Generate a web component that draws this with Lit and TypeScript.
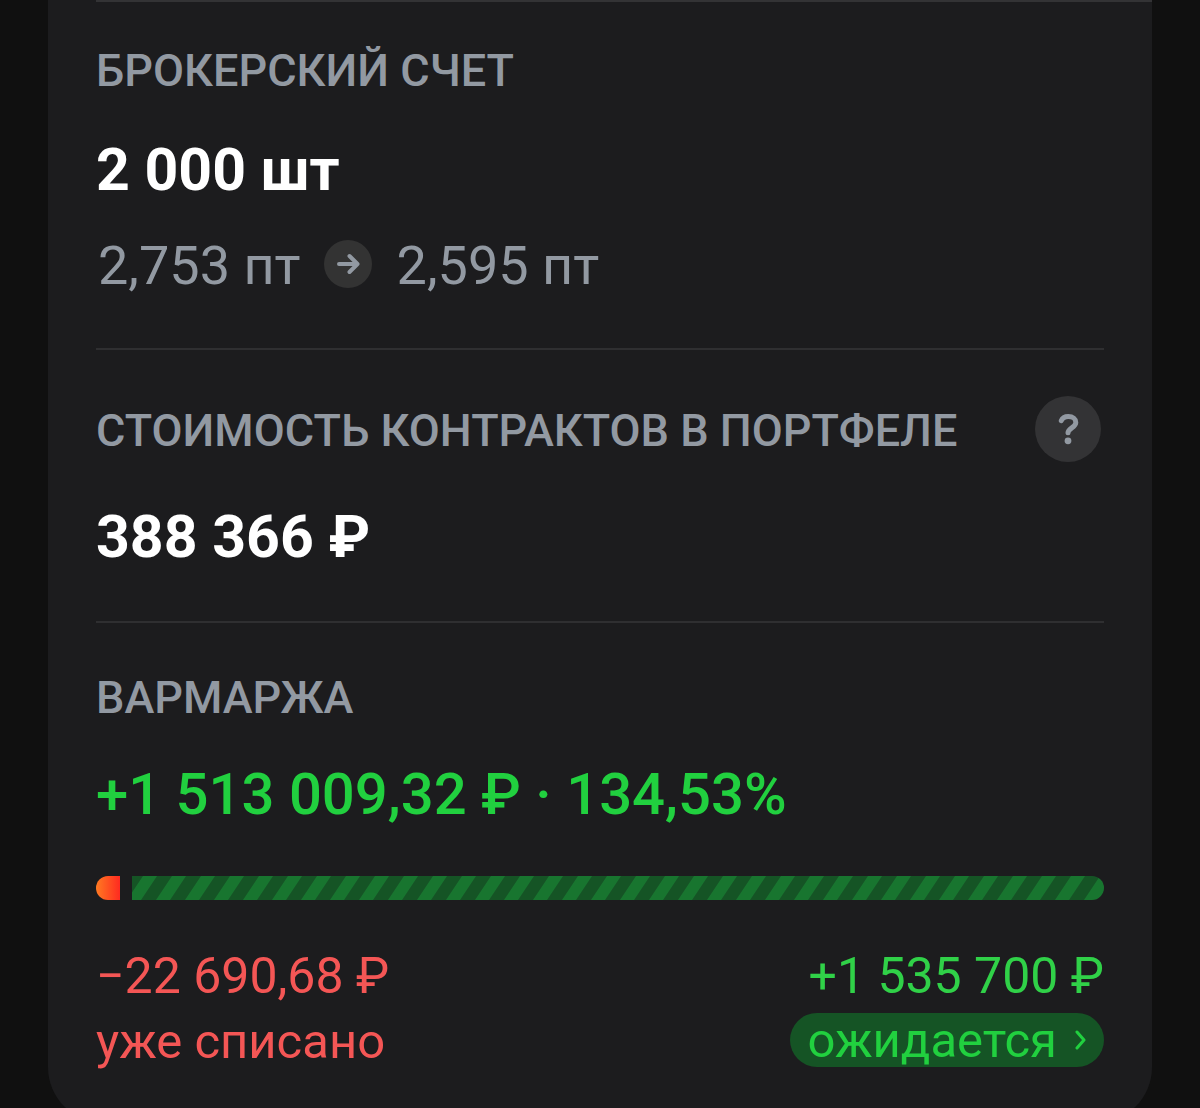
import { LitElement, html, css, svg } from "lit";
import { customElement } from "lit/decorators.js";

@customElement("app-root")
export class AppRoot extends LitElement {
  static styles = css`
    * { box-sizing: border-box; }
    :host {
      display: block;
      min-height: 100vh;
      padding: 0 48px;
      background: #101010;
      color: #ffffff;
      font-family: Roboto, "Liberation Sans", sans-serif;
    }
    .card {
      background: #1c1c1e;
      border-radius: 0 0 56px 56px;
      padding: 0 0 48px 48px;
      overflow: hidden;
    }
    section { margin-right: 48px; border-bottom: 2px solid #2f2f31; }
    section:last-child { border-bottom: 0; }
    .top { border-top: 2px solid #333335; }
    .account { padding: 38px 0 50px; }
    .value { padding: 46px 0 44px; }
    .margin { padding: 44px 0 0; }
    h2 { margin: 0; font-size: 45px; line-height: 62px; font-weight: 500; color: #9299a2; white-space: nowrap; }
    p { margin: 0; white-space: nowrap; }
    .head { display: flex; align-items: flex-end; justify-content: space-between; }
    .help {
      width: 66px; height: 66px; padding: 0; border: 0; border-radius: 50%;
      background: #333335; color: #9299a2; margin-right: 3px;
    }
    .help svg { display: block; width: 66px; height: 66px; }
    .big { margin-top: 28px; font-size: 59px; line-height: 80px; font-weight: 700; }
    .head + .big { margin-top: 35px; }
    .prices { display: flex; align-items: center; gap: 23px; margin-top: 24px; font-size: 54px; line-height: 64px; color: #9299a2; }
    .prices span { padding-left: 2px; }
    .arrow { width: 48px; height: 48px; margin-bottom: 4px; }
    .gain { margin-top: 25px; font-size: 58px; line-height: 80px; font-weight: 500; color: #21d03f; }
    .bar { display: flex; gap: 12px; height: 24px; margin-top: 42px; }
    .paid { width: 24px; border-radius: 12px 0 0 12px; background: linear-gradient(90deg, #ff7a22, #ff2a20); }
    .due { flex: 1; border-radius: 0 12px 12px 0; overflow: hidden; }
    .due svg { display: block; width: 100%; height: 24px; }
    .legend { display: flex; justify-content: space-between; margin-top: 43px; font-size: 49px; line-height: 66px; }
    .sum { font-size: 50px; }
    .loss { color: #f45655; }
    .income { display: flex; flex-direction: column; align-items: flex-end; color: #30d148; }
    .pill {
      display: flex; align-items: center; gap: 16px; height: 54px; padding: 2px 15px 0 18px; margin-top: 4px;
      border: 0; border-radius: 27px; background: #155425; color: #21d03f;
      font: 400 49px/54px Roboto, "Liberation Sans", sans-serif;
    }
    .pill svg { width: 16px; height: 20px; margin-bottom: 2px; }
  `;

  render() {
    return html`
      <main class="card">
        <div class="top"></div>
        <section class="account">
          <h2>БРОКЕРСКИЙ СЧЕТ</h2>
          <p class="big">2 000 шт</p>
          <p class="prices">
            <span>2,753 пт</span>
            <svg class="arrow" viewBox="0 0 48 48" aria-hidden="true">
              <circle cx="24" cy="24" r="24" fill="#333333" />
              <path d="M15 24H33M25.5 16L33.5 24L25.5 32" fill="none" stroke="#9299a2" stroke-width="4" stroke-linecap="round" stroke-linejoin="round" />
            </svg>
            <span>2,595 пт</span>
          </p>
        </section>
        <section class="value">
          <div class="head">
            <h2>СТОИМОСТЬ КОНТРАКТОВ В ПОРТФЕЛЕ</h2>
            <button class="help" aria-label="?">
              <svg viewBox="0 0 66 66" aria-hidden="true">
                <path d="M26.3 24.7C27.5 21.6 30 20.6 33.3 20.6C37.8 20.6 40.8 23 40.8 26.4C40.8 31.6 33 32 33 36.8" fill="none" stroke="currentColor" stroke-width="5" stroke-linecap="round" stroke-linejoin="round" />
                <circle cx="33" cy="44.8" r="3.4" fill="currentColor" />
              </svg>
            </button>
          </div>
          <p class="big">388 366 ₽</p>
        </section>
        <section class="margin">
          <h2>ВАРМАРЖА</h2>
          <p class="gain">+1 513 009,32 ₽ · 134,53%</p>
          <div class="bar">
            <div class="paid"></div>
            <div class="due">
              <svg aria-hidden="true">
                <defs>
                  <pattern id="stripes" width="29" height="24" patternUnits="userSpaceOnUse">
                    <rect width="29" height="24" fill="#155425" />
                    ${svg`<path d="M-5 24L11 0H25L9 24ZM24 24L40 0H54L38 24Z" fill="#18752f" />`}
                  </pattern>
                </defs>
                <rect width="100%" height="24" fill="url(#stripes)" />
              </svg>
            </div>
          </div>
          <div class="legend">
            <div class="loss"><p class="sum">−22 690,68 ₽</p><p>уже списано</p></div>
            <div class="income">
              <p class="sum">+1 535 700 ₽</p>
              <button class="pill">ожидается
                <svg viewBox="0 0 16 20" aria-hidden="true"><path d="M4 2L11 10L4 18" fill="none" stroke="currentColor" stroke-width="3" stroke-linecap="round" stroke-linejoin="round" /></svg>
              </button>
            </div>
          </div>
        </section>
      </main>
    `;
  }
}
